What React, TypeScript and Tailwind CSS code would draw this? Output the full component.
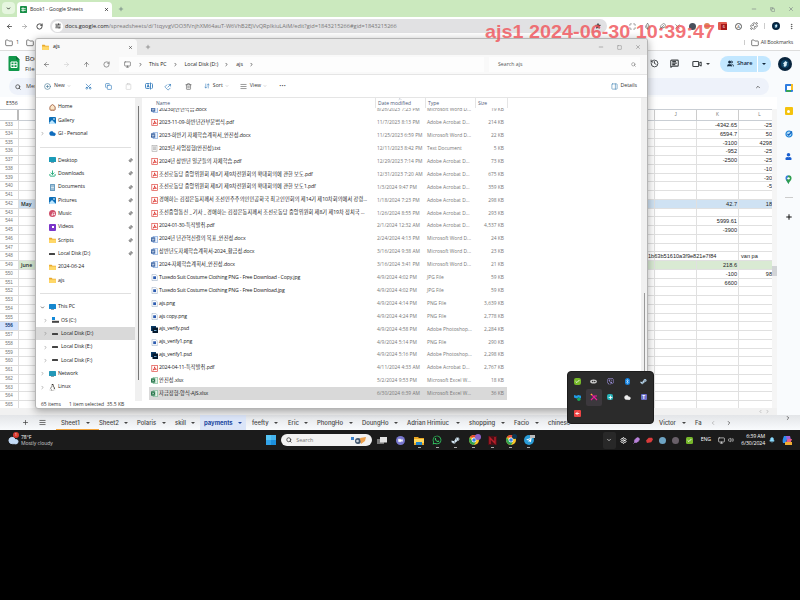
import React from "react";
import {
  ArrowLeft, ArrowRight, ArrowUp, RotateCw, ChevronDown, ChevronRight, ChevronLeft, ChevronUp, X, Plus, Minus, Square, Copy,
  Star, Search, Folder, History, MessageSquareText, Video, Scissors, Clipboard, Share, Trash2, ArrowDownUp,
  AlignJustify, Monitor, Pin, Bell, Puzzle, MoreVertical, Volume2, Maximize, House, Cloud, Music, Download, Users,
  PanelRight, CirclePlus, SlidersHorizontal, Mic, Bluetooth, Check, MapPin, Feather, Settings,
} from "lucide-react";
import { FaWhatsapp, FaSteamSymbol, FaTelegramPlane, FaLinux, FaUser, FaViber } from "react-icons/fa";

const SEGOE = "font-['Open_Sans','Noto_Sans_CJK_KR',sans-serif]";

/* ---------- shared bits ---------- */
const Caret = ({ className = "" }: { className?: string }) => (
  <svg viewBox="0 0 6 3" className={"h-[2px] w-[4px] shrink-0 " + className}><path d="M0 0h6L3 3z" fill="currentColor" /></svg>
);

const Avatar = ({ className }: { className: string }) => (
  <svg viewBox="0 0 14 14" className={"shrink-0 " + className}>
    <circle cx="7" cy="7" r="7" fill="#08243d" />
    <circle cx="7" cy="7" r="4" fill="#0f4568" />
    <path d="M7.500 4l2 1.500-1 1.500.5 1-2 2-1.500-1 .5-1.500-1-1z" fill="#d5ebf5" />
  </svg>
);

/* ---------- browser chrome ---------- */
function TabStrip() {
  return (
    <div className="flex h-[17px] items-end bg-[#cbe9be]">
      <div className="mb-[3px] ml-[2px] flex h-[12px] w-[13px] items-center justify-center rounded bg-[#e6f6df]">
        <ChevronDown className="size-[5px]" strokeWidth={3.5} />
      </div>
      <div className="ml-[2px] flex h-[15px] w-[95px] items-center rounded-t bg-white pl-[3px] pr-[3px]">
        <svg viewBox="0 0 8 8" className="size-[7px]"><rect width="8" height="8" rx="1" fill="#188f47" /><path d="M1.5 3h5M3.4 1.5v5M1.5 5h5" stroke="#fff" strokeWidth=".9" /></svg>
        <span className="ml-[3px] text-[5.300px] tracking-[-0.120px] text-[#333]">Book1 - Google Sheets</span>
        <X className="ml-auto size-[5px] text-[#111]" strokeWidth={3} />
      </div>
      <Plus className="mb-[5px] ml-[6px] size-[6px] text-[#456]" strokeWidth={2} />
      <div className="mb-[5px] ml-auto flex items-center gap-[13px] pr-[6px] text-[#667]">
        <Minus className="size-[6px]" /><Copy className="size-[5px]" /><X className="size-[6px]" />
      </div>
    </div>
  );
}

function AddressBar() {
  return (
    <div className="flex h-[18px] items-center bg-white pl-[6px] pr-[5px] text-[#333]">
      <ArrowLeft className="size-[7px]" strokeWidth={2.5} />
      <ArrowRight className="ml-[8px] size-[7px] text-[#888]" />
      <RotateCw className="ml-[8px] size-[7px]" strokeWidth={3} />
      <div className="ml-[7px] flex h-[14px] w-[557px] items-center rounded-full bg-[#e1e1e3] pl-[2px] pr-[6px]">
        <div className="flex size-[11px] items-center justify-center rounded-full bg-white"><SlidersHorizontal className="size-[6px]" strokeWidth={3} /></div>
        <span className="ml-[2px] whitespace-nowrap text-[5.600px] tracking-[0.010px] text-[#777]">
          <span className="text-[#222]">docs.google.com</span>/spreadsheets/d/1tqyvgVOO3fVnjhXM64auT-W6VhB2EJVvQRpIkiuLAiM/edit?gid=1843215266#gid=1843215266
        </span>
        <Star className="ml-auto size-[6px]" fill="#333" />
      </div>
      <div className="ml-auto flex items-center gap-[8px] text-[#555]">
        <Maximize className="size-[7px]" /><Mic className="size-[7px]" /><Feather className="size-[7px]" /><X className="size-[7px]" />
        <span className="size-[7px] rounded-full bg-[#49505c]" />
        <span className="size-[6px] rounded-full bg-[#df8556]" />
        <span className="flex h-[8px] w-[9px] items-end justify-end rounded-[1px] bg-[#e15b4e]"><span className="size-[6px] bg-[#a71818] text-center text-[4px] leading-[6px] text-white">6</span></span>
        <span className="size-[7px] rounded-full border-[0.7px] border-[#555] text-center text-[4px] leading-[6px]">A</span>
        <Puzzle className="size-[8px]" strokeWidth={2.4} />
        <span className="-ml-[2px] -mr-[1px] h-[6px] w-px bg-[#ccc]" />
        <Avatar className="size-[8px]" />
        <MoreVertical className="size-[7px]" strokeWidth={3} />
      </div>
    </div>
  );
}

function BookmarksBar() {
  return (
    <div className="flex h-[16px] items-center border-b border-[#ddd] bg-white pl-[5px] pr-[7px] text-[5.4px] text-[#444]">
      <Folder className="size-[8px]" /><span className="ml-[3px]">1</span><Folder className="ml-[7px] size-[8px]" />
      <span className="ml-auto h-[5px] w-px bg-[#ccc]" />
      <Folder className="ml-[6px] size-[8px]" /><span className="ml-[2px] text-[5.200px] tracking-[-0.180px]">All Bookmarks</span>
    </div>
  );
}

/* ---------- google sheets ---------- */
function SheetsHeader() {
  return (
    <div className="h-[46px] bg-[#f9fbfd]">
      <div className="flex h-[25px] items-center pl-[8px] pr-[8px]">
        <svg viewBox="0 0 11 15" className="h-[15px] w-[12px]"><path d="M1 0h6.500L11 3.500V14a1 1 0 0 1-1 1H1a1 1 0 0 1-1-1V1a1 1 0 0 1 1-1z" fill="#11984b" /><path d="M7.500 0L11 3.500H7.500z" fill="#087337" /><path d="M2.500 6h6v5.500h-6zM2.500 8.700h6M5.500 6v5.500" stroke="#fff" fill="none" /></svg>
        <div className="ml-[5px] leading-none text-[#333]">
          <div className="text-[7.500px]">Book1</div>
          <div className="mt-[3px] text-[6px]">File Edit</div>
        </div>
        <div className="ml-auto flex items-center text-[#3c4043]">
          <History className="size-[9px]" strokeWidth={2.400} />
          <MessageSquareText className="ml-[11px] size-[9px]" strokeWidth={2.800} />
          <Video className="ml-[13px] size-[10px]" strokeWidth={2.600} />
          <Caret className="ml-[4px]" />
          <div className="ml-[10px] flex h-[16px] w-[51px] items-center rounded-full bg-[#c2e7ff] text-[#10263b]">
            <Users className="ml-[7px] size-[7px]" fill="currentColor" />
            <span className="ml-[3px] text-[5.600px] font-semibold">Share</span>
            <span className="ml-[4px] h-full w-px bg-white" />
            <Caret className="ml-[4px]" />
          </div>
          <Avatar className="ml-[7px] size-[14px]" />
        </div>
      </div>
      <div className="ml-[9px] mt-[2px] flex h-[17px] w-[760px] items-center rounded-full bg-[#eef2fa] pl-[6px] pr-[8px] text-[#444]">
        <Search className="size-[6px]" strokeWidth={3} /><span className="ml-[5px] text-[5.600px]">Menus</span>
        <ChevronUp className="ml-auto size-[6px]" strokeWidth={3} />
      </div>
    </div>
  );
}

type GridRow = { a?: string; j?: string; k?: string; l?: string; tone?: string };
const gridData: Record<number, GridRow> = {
  533: { k: "-4342.65", l: "-25" }, 534: { k: "6594.7", l: "50" }, 535: { k: "-3100", l: "4298" }, 536: { k: "-952", l: "-25" },
  537: { k: "-2500", l: "-25" }, 538: { l: "-10" }, 539: { l: "-30" }, 540: { l: "-5" },
  542: { a: "May", k: "42.7", l: "18", tone: "bg-[#cfe2f3]" },
  544: { k: "5999.61" }, 545: { k: "-3900" }, 548: { j: "1b63b51610a3f9e821e7f84", l: "van pa" },
  549: { a: "June", k: "218.6", tone: "bg-[#d9ead3]" }, 550: { k: "-100", l: "98" }, 551: { k: "6600" },
};

function Grid() {
  const rows = Array.from({ length: 33 }, (_, i) => 533 + i);
  return (
    <div className="w-[772px] shrink-0 overflow-hidden bg-white font-['Liberation_Sans',sans-serif] text-[5.600px] text-[#222]">
      <div className="flex h-[12px] border-b border-t border-[#c9ced4] text-center text-[4.500px] leading-[10px] text-[#777]">
        <span className="w-[19px] shrink-0 border-r-2 border-[#bbb]" /><span className="w-[636px] shrink-0 border-r border-[#ccc]" />
        <span className="w-[42px] shrink-0 border-r border-[#ccc]">J</span><span className="w-[42px] shrink-0 border-r border-[#ccc]">K</span><span className="w-[33px] shrink-0 pl-[8px]">L</span>
      </div>
      {rows.map((n) => {
        const r = gridData[n] ?? {};
        const tone = r.tone ?? "";
        return (
          <div key={n} className="flex h-[8.760px] leading-[8.500px]">
            <span className={"w-[19px] shrink-0 border-b border-r border-[#ddd] text-center text-[4.600px] " + (n === 556 ? "bg-[#d3e3fd] font-bold text-[#143a73]" : "text-[#777]")}>{n}</span>
            <span className={"w-[636px] shrink-0 border-b border-r border-[#e0e0e0] pl-[2px] font-['Open_Sans',sans-serif] text-[5.200px] font-semibold " + tone}>{r.a}</span>
            <span className={"shrink-0 border-b border-[#e0e0e0] " + tone + (r.j ? " -ml-[7px] w-[49px] whitespace-nowrap" : " w-[42px] border-r")}>{r.j}</span>
            <span className={"w-[42px] shrink-0 border-b border-r border-[#e0e0e0] pr-[1px] text-right " + tone}>{r.k}</span>
            <span className={"w-[33px] shrink-0 border-b border-[#e0e0e0] " + tone + (r.l === "van pa" ? " pl-[2px]" : " text-right")}>{r.l}</span>
          </div>
        );
      })}
    </div>
  );
}

function SidePanel() {
  return (
    <div className="flex w-[23px] flex-col items-center bg-[#f9fbfd]">
      <svg viewBox="0 0 8 8" className="mt-[-13px] size-[8px]"><rect width="8" height="8" rx="1" fill="#2f7de1" /><rect x="2" y="2" width="4" height="4" fill="#fff" /><path d="M6 0h2v6H6z" fill="#f7be25" /><path d="M1 6h5v2H1z" fill="#38a457" /></svg>
      <div className="mt-[15px] flex size-[8px] items-center justify-center rounded-[1px] bg-[#f4c20d]"><span className="size-[3px] rounded-full bg-white" /></div>
      <svg viewBox="0 0 8 8" className="mt-[15px] size-[8px]"><circle cx="4" cy="4" r="3" fill="#b6def8" stroke="#1a80d8" strokeWidth="1.200" /><path d="M2.500 4l1.200 1.200L7 1.500" stroke="#1161bd" strokeWidth="1.200" fill="none" /></svg>
      <FaUser className="mt-[15px] size-[7px] text-[#1a5fd0]" />
      <svg viewBox="0 0 8 10" className="mt-[15px] h-[9px] w-[7px]"><path d="M4 10C3 7.500.5 6.500.5 3.700A3.500 3.500 0 0 1 4 .2z" fill="#3a7de0" /><path d="M4 .2a3.500 3.500 0 0 1 3.500 3.500C7.500 6.500 5 7.500 4 10L1.500 6z" fill="#2f9e50" /><circle cx="4" cy="3.700" r="1.400" fill="#fff" /></svg>
      <div className="mt-[13px] h-px w-[8px] bg-[#ccc]" />
      <Plus className="mt-[15px] size-[8px] text-[#111]" strokeWidth={3} />
    </div>
  );
}

const sheetTabs: [string, string][] = [
  ["Sheet1", "w-[38px] pr-[9px]"], ["Sheet2", "w-[38px] pr-[9px]"], ["Polaris", "w-[38px] pr-[9px]"], ["skill", "w-[25px] pr-[5px]"],
  ["payments", "w-[46px] px-[4px]"], ["feefty", "w-[42px] pl-[6px] pr-[10px]"], ["Eric", "w-[29px] pr-[9px]"], ["PhongHo", "w-[45px] pr-[9px]"],
  ["DoungHo", "w-[45px] pr-[9px]"], ["Adrian Hrimiuc", "w-[62px] pr-[9px]"], ["shopping", "w-[45px] pr-[9px]"], ["Facio", "w-[34px] pr-[9px]"],
  ["chinese", "w-[34px] pr-[4px]"], ["", "w-[77px]"], ["Victor", "w-[36px] pr-[9px]"],
];

function SheetTabs() {
  return (
    <div className="flex h-[15px] items-center bg-gradient-to-b from-[#e3e5e8] to-[#f9fbfd] font-['Inter',sans-serif] text-[5.900px] font-medium leading-none text-[#444]">
      <Plus className="ml-[22px] size-[7px]" strokeWidth={2.500} />
      <AlignJustify className="ml-[10px] size-[7px]" strokeWidth={2.500} />
      <div className="ml-[10px] flex h-full">
        {sheetTabs.map(([name, w]) => {
          const tone = name === "payments" ? " bg-[#dbe5f8] font-bold text-[#2047a0]" : name === "Sheet1" ? " ml-0 border-b border-[#f3a33a] pl-[5px] w-[43px] pr-[9px]" : "";
          return (
            <div key={name} className={"flex h-full items-center justify-between whitespace-nowrap pt-[1px] " + (name === "Sheet1" ? "" : w) + tone}>
              <span>{name}</span>{name && <Caret />}
            </div>
          );
        })}
      </div>
      <span className="pt-[1px]">Fa</span>
      <ChevronLeft className="ml-[8px] size-[6px] text-[#aaa]" strokeWidth={3} />
      <ChevronRight className="ml-[10px] size-[6px]" strokeWidth={3} />
      <ChevronRight className="ml-auto mr-[9px] size-[6px] self-start" strokeWidth={3} />
    </div>
  );
}

/* ---------- file explorer ---------- */
type Kind = "docx" | "pdf" | "txt" | "img" | "psd" | "xlsx";
const files: [Kind, string, string, string, string][] = [
  ["docx", "2023하반년학습.docx", "8/26/2023 7:23 PM", "Microsoft Word D...", "19 KB"],
  ["pdf", "2023-11-09-하반년간부문법식.pdf", "11/7/2023 8:13 PM", "Adobe Acrobat D...", "214 KB"],
  ["docx", "2023-하반기 자체학습계획서_안진성.docx", "11/25/2023 6:59 PM", "Microsoft Word D...", "22 KB"],
  ["txt", "2023년 사업정형(안진성).txt", "12/11/2023 8:42 PM", "Text Document", "5 KB"],
  ["pdf", "2024년 상반년 일군들의 자체학습.pdf", "12/29/2023 7:14 PM", "Adobe Acrobat D...", "73 KB"],
  ["pdf", "조선로동당 중앙위원회 제8기 제9차전원회의 확대회의에 관한 보도.pdf", "12/31/2023 7:20 AM", "Adobe Acrobat D...", "675 KB"],
  ["pdf", "조선로동당 중앙위원회 제8기 제9차전원회의 확대회의에 관한 보도1.pdf", "1/3/2024 9:47 PM", "Adobe Acrobat D...", "359 KB"],
  ["pdf", "경애하는 김정은동지께서 조선민주주의인민공화국 최고인민회의 제14기 제10차회의에서 강령...", "1/18/2024 7:23 PM", "Adobe Acrobat D...", "298 KB"],
  ["pdf", "조선중앙통신 _ 기사 _ 경애하는 김정은동지께서 조선로동당 중앙위원회 제8기 제19차 정치국 ...", "1/26/2024 8:55 PM", "Adobe Acrobat D...", "293 KB"],
  ["pdf", "2024-01-30-특작발취.pdf", "2/1/2024 12:32 AM", "Adobe Acrobat D...", "4,537 KB"],
  ["docx", "2024년 년간혁신결의 목표_안진성.docx", "2/24/2024 4:13 PM", "Microsoft Word D...", "24 KB"],
  ["docx", "상반년도자체학습계획서-2024_황금성.docx", "3/16/2024 9:38 AM", "Microsoft Word D...", "23 KB"],
  ["docx", "2024-자체학습계획서_안진성.docx", "3/16/2024 3:41 PM", "Microsoft Word D...", "21 KB"],
  ["img", "Tuxedo Suit Costume Clothing PNG - Free Download - Copy.jpg", "4/9/2024 4:02 PM", "JPG File", "59 KB"],
  ["img", "Tuxedo Suit Costume Clothing PNG - Free Download.jpg", "4/9/2024 4:02 PM", "JPG File", "59 KB"],
  ["img", "ajs.png", "4/9/2024 4:14 PM", "PNG File", "3,639 KB"],
  ["img", "ajs copy.png", "4/9/2024 4:24 PM", "PNG File", "2,778 KB"],
  ["psd", "ajs_verify.psd", "4/9/2024 4:58 PM", "Adobe Photoshop...", "2,284 KB"],
  ["img", "ajs_verify1.png", "4/9/2024 5:14 PM", "PNG File", "290 KB"],
  ["psd", "ajs_verify1.psd", "4/9/2024 5:16 PM", "Adobe Photoshop...", "2,298 KB"],
  ["pdf", "2024-04-11-특작발취.pdf", "4/11/2024 4:33 AM", "Adobe Acrobat D...", "2,767 KB"],
  ["xlsx", "안진성.xlsx", "5/2/2024 9:53 PM", "Microsoft Excel W...", "18 KB"],
  ["xlsx", "자금정형-양식-AJS.xlsx", "6/30/2024 6:39 AM", "Microsoft Excel W...", "36 KB"],
];

/* Hangul runs are set a little looser than Latin runs. */
const FileName = ({ name }: { name: string }) => (
  <span className="ml-[1px] tracking-[-0.170px]">
    {name.split(/([가-힣]+)/).map((part, i) => (i % 2 ? <span key={i} className="tracking-[0.120px]">{part}</span> : part))}
  </span>
);

function FileIcon({ kind }: { kind: Kind }) {
  return (
    <svg viewBox="0 0 7 7" className="size-[7px] shrink-0">
      {kind === "docx" && <><path d="M2 .4h4.600v6.200H2z" fill="#eaf2fd" stroke="#4a7fcb" strokeWidth=".5" /><rect y="1.400" width="4.200" height="4.200" fill="#2b579a" /><path d="M.8 2.500l.6 2 .7-2 .7 2 .6-2" stroke="#fff" strokeWidth=".5" fill="none" /></>}
      {kind === "xlsx" && <><path d="M2 .4h4.600v6.200H2z" fill="#e3f3e8" stroke="#4aa371" strokeWidth=".5" /><rect y="1.400" width="4.200" height="4.200" fill="#217346" /><path d="M1.200 2.500l1.800 2M3 2.500l-1.800 2" stroke="#fff" strokeWidth=".6" /></>}
      {kind === "pdf" && <><rect x=".8" y=".5" width="5.600" height="6" fill="#fff" stroke="#e04a43" strokeWidth=".7" /><path d="M2 5.200c1-1 1.600-2 1.600-3.400 0 1.500.8 2.300 1.800 2.500-1.200-.2-2.500.2-3.400.9z" fill="none" stroke="#d81e18" strokeWidth=".8" /></>}
      {kind === "txt" && <><rect x="1" y=".4" width="5" height="6.200" fill="#f4f4f4" stroke="#999" strokeWidth=".5" /><path d="M2 2h3M2 3.200h3M2 4.400h3" stroke="#888" strokeWidth=".5" /></>}
      {kind === "img" && <><path d="M1 .4h3.800L6.300 2v4.600H1z" fill="#fff" stroke="#8aa0bb" strokeWidth=".5" /><rect x="2.200" y="2.300" width="2.800" height="2.800" fill="#2d5cb0" /></>}
      {kind === "psd" && <><rect width="5" height="5" fill="#0a3a66" /><rect x="1.500" y="1.500" width="5.500" height="5.500" fill="#04192e" /><path d="M3 4.500h2.500" stroke="#8cc8f5" strokeWidth=".8" /></>}
    </svg>
  );
}

const FolderIcon = () => (
  <svg viewBox="0 0 8 7" className="h-[6px] w-[7px] shrink-0"><path d="M0 1h3l1 1h4v5H0z" fill="#e8a92c" /><path d="M0 2.800h8V7H0z" fill="#ffd869" /></svg>
);
const DriveIcon = () => <span className="h-[2px] w-[6px] shrink-0 rounded-[0.5px] bg-[#444]" />;
const PicIcon = () => <svg viewBox="0 0 7 7" className="size-[7px]"><rect width="7" height="7" rx="1" fill="#0d6fb8" /><path d="M0 6l3-3 4 4H1z" fill="#bde6ff" /><circle cx="5" cy="2" r=".8" fill="#fff" /></svg>;
const PcIcon = ({ fill = "#1587cf" }: { fill?: string }) => <svg viewBox="0 0 7 6" className="h-[6px] w-[7px]"><rect width="7" height="5" rx=".6" fill={fill} /><path d="M2 5.600h3" stroke="#678" strokeWidth=".8" /></svg>;

type Nav = { label?: string; icon?: React.ReactNode; arrow?: "r" | "d"; pin?: boolean; child?: boolean; active?: boolean };
const nav: Nav[] = [
  { label: "Home", icon: <House className="size-[7px] text-[#9b5a3c]" strokeWidth={3} fill="#fbe6c8" /> },
  { label: "Gallery", icon: <PicIcon /> },
  { label: "GI - Personal", icon: <Cloud className="size-[7px] text-[#0f6cbd]" fill="#0f6cbd" />, arrow: "r" },
  {},
  { label: "Desktop", icon: <PcIcon fill="#1b9bb8" />, pin: true },
  { label: "Downloads", icon: <Download className="size-[7px] text-[#17a672]" strokeWidth={3} />, pin: true },
  { label: "Documents", icon: <svg viewBox="0 0 7 7" className="size-[7px]"><rect x="1" width="5" height="7" rx=".6" fill="#6b9dbf" /><path d="M2 2h3M2 3.500h3M2 5h3" stroke="#fff" strokeWidth=".7" /></svg>, pin: true },
  { label: "Pictures", icon: <PicIcon />, pin: true },
  { label: "Music", icon: <span className="flex size-[7px] items-center justify-center rounded-full bg-[#d0516c]"><Music className="size-[4px] text-white" strokeWidth={3} /></span>, pin: true },
  { label: "Videos", icon: <span className="flex size-[7px] items-center justify-center rounded-[1px] bg-[#7b35c9]"><span className="size-[2px] bg-white" /></span>, pin: true },
  { label: "Scripts", icon: <FolderIcon />, pin: true },
  { label: "Local Disk (D:)", icon: <DriveIcon />, pin: true },
  { label: "2024-06-24", icon: <FolderIcon /> },
  { label: "ajs", icon: <FolderIcon /> },
  {},
  { label: "This PC", icon: <PcIcon />, arrow: "d" },
  { label: "OS (C:)", icon: <svg viewBox="0 0 7 6" className="h-[6px] w-[7px]"><rect x="0" y="0" width="3" height="3" fill="#1389d8" /><rect y="3.800" width="7" height="2" fill="#444" /></svg>, arrow: "r", child: true },
  { label: "Local Disk (D:)", icon: <DriveIcon />, arrow: "r", child: true, active: true },
  { label: "Local Disk (E:)", icon: <DriveIcon />, arrow: "r", child: true },
  { label: "Local Disk (F:)", icon: <DriveIcon />, arrow: "r", child: true },
  { label: "Network", icon: <PcIcon fill="#2498b8" />, arrow: "r" },
  { label: "Linux", icon: <FaLinux className="size-[7px] text-[#33302a]" />, arrow: "r" },
];

function NavPane() {
  return (
    <div className="w-[99px] shrink-0 pt-[2.500px]">
      {nav.map((n, i) => n.label ? (
        <div key={i} className={"flex h-[13.330px] items-center pr-[2px] text-[5.200px] text-[#222] " + (n.child ? "pl-[7px] " : "pl-[4px] ") + (n.active ? "bg-[#d9d9d9]" : "")}>
          <span className="flex w-[9px] items-center">
            {n.arrow === "r" && <ChevronRight className="size-[5px] text-[#777]" strokeWidth={2.500} />}
            {n.arrow === "d" && <ChevronDown className="size-[5px] text-[#333]" strokeWidth={3} />}
          </span>
          <span className="flex w-[9px] shrink-0 items-center">{n.icon}</span>
          <span className="whitespace-nowrap tracking-[-0.100px]">{n.label}</span>
          {n.pin && <Pin className="ml-auto size-[5px] rotate-45 text-[#777]" strokeWidth={2.500} fill="#999" />}
        </div>
      ) : (
        <div key={i} className="flex h-[13.330px] items-center"><div className="ml-[4px] h-px w-[91px] bg-[#e0e0e0]" /></div>
      ))}
    </div>
  );
}

function FileList() {
  return (
    <div className="min-w-0 flex-1">
      <div className="flex h-[10px] items-center text-[5px] text-[#4c5a78]">
        <span className="w-[226px] pl-[7px] pt-[1px]">Name</span>
        <span className="relative h-full w-[50px] border-l border-[#e5e5e5] pl-[2px] leading-[11px]">
          Date modified<ChevronUp className="absolute left-[22px] top-[-1px] size-[4px]" />
        </span>
        <span className="h-full w-[50px] border-l border-[#e5e5e5] pl-[2px] leading-[11px]">Type</span>
        <span className="h-full w-[33px] border-x border-[#e5e5e5] pl-[2px] leading-[11px]">Size</span>
      </div>
      <div className="h-[293px] overflow-hidden">
        <div className="-mt-[4.500px]">
          {files.map(([kind, name, date, type, size], i) => (
            <div key={name} className={"flex h-[12.910px] w-[358px] items-center whitespace-nowrap text-[4.900px] text-[#777] " + (i === files.length - 1 ? "bg-[#d9d9d9]" : "")}>
              <span className="flex w-[228px] items-center pl-[2px] text-[5.200px] text-[#222]"><FileIcon kind={kind} /><FileName name={name} /></span>
              <span className="w-[50px]">{date}</span>
              <span className="w-[45px]">{type}</span>
              <span className="w-[32px] text-right">{size}</span>
            </div>
          ))}
        </div>
      </div>
    </div>
  );
}

const RenameIcon = ({ className }: { className: string }) => (
  <svg viewBox="0 0 16 16" className={className} fill="none" stroke="currentColor" strokeWidth="1.600"><path d="M9 3H3a2 2 0 0 0-2 2v6a2 2 0 0 0 2 2h6M13 3a2 2 0 0 1 2 2v6a2 2 0 0 1-2 2M11 1v14M4 11l2.200-6 2.200 6M4.800 9h3" /></svg>
);

function Explorer() {
  return (
    <div className="absolute left-[35px] top-[38px] flex h-[371px] w-[613px] flex-col overflow-hidden rounded-[3px] border border-[#b5b5b5] bg-white shadow-[0_2px_8px_rgba(0,0,0,0.35)]">
      <div className="flex h-[16px] shrink-0 items-center bg-[#e8e8e8]">
        <div className="flex h-full w-[101px] items-center rounded-t bg-[#f9f9f9] pl-[6px] pr-[4px]">
          <FolderIcon /><span className="ml-[4px] text-[5.200px]">ajs</span><X className="ml-auto size-[5px]" />
        </div>
        <Plus className="ml-[8px] size-[6px] text-[#555]" />
        <div className="ml-auto flex items-center gap-[13px] pr-[6px] text-[#777]"><Minus className="size-[6px]" /><Square className="size-[5px]" /><X className="size-[6px]" /></div>
      </div>
      <div className="flex h-[20px] shrink-0 items-center border-b border-[#e5e5e5] bg-[#f9f9f9] text-[5.200px] text-[#222]">
        <ArrowLeft className="ml-[7px] size-[7px] text-[#555]" />
        <ArrowRight className="ml-[13px] size-[7px] text-[#ccc]" />
        <ArrowUp className="ml-[13px] size-[7px] text-[#555]" />
        <RotateCw className="ml-[13px] size-[7px] text-[#555]" />
        <div className="ml-[9px] flex h-[15px] w-[365px] items-center bg-[#fdfdfd] pl-[5px]">
          <Monitor className="size-[7px] text-[#555]" />
          <ChevronRight className="ml-[7px] size-[5px]" strokeWidth={3} /><span className="ml-[6px]">This PC</span>
          <ChevronRight className="ml-[6px] size-[5px]" strokeWidth={3} /><span className="ml-[7px]">Local Disk (D:)</span>
          <ChevronRight className="ml-[6px] size-[5px]" strokeWidth={3} /><span className="ml-[7px]">ajs</span><ChevronRight className="ml-[6px] size-[5px]" strokeWidth={3} />
        </div>
        <div className="ml-[5px] flex h-[15px] w-[151px] items-center bg-[#fdfdfd] pl-[9px] pr-[4px] text-[#555]"><span>Search ajs</span><Search className="ml-auto size-[5px]" /></div>
      </div>
      <div className="flex h-[23px] shrink-0 items-center border-b border-[#e5e5e5] bg-white pt-[0.500px] text-[5.200px] text-[#333]">
        <CirclePlus className="ml-[8px] size-[7px] text-[#3d7291]" /><span className="ml-[3px]">New</span><ChevronDown className="ml-[2px] size-[4px] text-[#888]" />
        <Scissors className="ml-[14px] size-[7px] -rotate-90 text-[#1f6fb5]" />
        <Copy className="ml-[13px] size-[7px] text-[#1f6fb5]" />
        <Clipboard className="ml-[13px] size-[7px] text-[#ccc]" />
        <RenameIcon className="ml-[13px] size-[8px] text-[#1f6fb5]" />
        <Share className="ml-[12px] size-[7px] rotate-45 text-[#1f6fb5]" />
        <Trash2 className="ml-[13px] size-[7px] text-[#555]" />
        <ArrowDownUp className="ml-[12px] size-[6px] text-[#1f6fb5]" /><span className="ml-[3px]">Sort</span><ChevronDown className="ml-[2px] size-[4px] text-[#888]" />
        <AlignJustify className="ml-[11px] size-[7px] text-[#555]" /><span className="ml-[3px]">View</span><ChevronDown className="ml-[2px] size-[4px] text-[#888]" />
        <span className="ml-[12px] text-[7px] font-bold tracking-[0.300px]">···</span>
        <PanelRight className="ml-auto size-[7px] text-[#3c7fb2]" /><span className="ml-[3px] mr-[10px]">Details</span>
      </div>
      <div className="flex h-[303px] shrink-0 overflow-hidden">
        <NavPane />
        <div className="flex w-[7px] shrink-0 justify-center bg-[#f0f0f0] py-[7px]"><div className="mt-[1px] h-[274px] w-px bg-[#777]" /></div>
        <div className="w-[7px]" />
        <FileList />
        <div className="w-[6px] bg-[#f0f0f0] pt-[195px]"><div className="mx-auto h-[104px] w-px bg-[#999]" /></div>
      </div>
      <div className="flex flex-1 items-center pb-[1px] pl-[5px] text-[5px] leading-none text-[#333]"><span>65 items</span><span className="ml-[8px]">1 item selected&nbsp; 35.5 KB</span></div>
    </div>
  );
}

/* ---------- taskbar ---------- */
const ChromeLogo = () => (
  <svg viewBox="0 0 10 10" className="size-[10px]"><circle cx="5" cy="5" r="5" fill="#f9c52a" /><path d="M.7 2.500A5 5 0 0 1 9.300 2.500H5z" fill="#e7443a" /><path d="M.7 2.500A5 5 0 0 0 5 10l2-3.500-4-1z" fill="#31a453" /><circle cx="5" cy="5" r="2.400" fill="#fff" /><circle cx="5" cy="5" r="1.800" fill="#347fe5" /></svg>
);
const TaskIcon = ({ children, on }: { children: React.ReactNode; on?: boolean }) => (
  <div className="relative flex h-[20px] w-[18.300px] shrink-0 items-center justify-center">
    <div className="relative flex h-[11px] items-center">{children}</div>
    {on && <span className="absolute bottom-[2px] h-px w-[3px] bg-[#aaa]" />}
  </div>
);

function Taskbar() {
  return (
    <div className="flex h-[20px] items-center bg-[#1b1b1b] text-white">
      <div className="flex w-[262px] items-center pl-[8px]">
        <div className="relative">
          <Cloud className="size-[11px] text-[#c4dcf8]" fill="#c4dcf8" />
          <span className="absolute -top-[3px] left-[5px] size-[6px] rounded-full bg-[#d83a2f] text-center text-[4px] leading-[6px]">1</span>
        </div>
        <div className="ml-[2px] text-[5.100px] leading-[6.500px] tracking-[-0.070px]"><div>78°F</div><div className="text-[#ccc]">Mostly cloudy</div></div>
      </div>
      <TaskIcon><span className="grid size-[10px] grid-cols-2 gap-[0.600px]"><i className="bg-[#55c5f5]" /><i className="bg-[#45b4ef]" /><i className="bg-[#32a3e9]" /><i className="bg-[#1c90dd]" /></span></TaskIcon>
      <div className="ml-[1px] flex h-[12px] w-[91px] items-center rounded-full bg-[#f2f2f2] px-[5px] text-[#333]">
        <Search className="size-[6px]" strokeWidth={3} /><span className="ml-[4px] text-[5.400px] text-[#777]">Search</span>
        <svg viewBox="0 0 16 9" className="ml-auto h-[9px] w-[16px]"><rect x="0" y="1" width="3" height="3" fill="#3c82cb" /><circle cx="7" cy="5" r="3" fill="#40556d" /><circle cx="6.500" cy="5" r="1.300" fill="#ccd5df" /><path d="M9 2l6-1-1 4-4 3z" fill="#eda04b" /></svg>
      </div>
      <div className="ml-[1px] flex">
        <TaskIcon><svg viewBox="0 0 10 9" className="h-[9px] w-[10px]"><rect y="3" width="7" height="5" fill="#777" /><rect x="3" y="1" width="7" height="5.500" fill="#e2e2e2" /></svg></TaskIcon>
        <TaskIcon><span className="flex size-[9px] items-center justify-center rounded-full bg-[#7776cf]"><Video className="size-[5px]" fill="white" /></span></TaskIcon>
        <TaskIcon on><svg viewBox="0 0 10 9" className="h-[9px] w-[10px]"><path d="M0 1h4l1 1h5v7H0z" fill="#e9a623" /><path d="M0 3h10v4H0z" fill="#ffd85d" /><path d="M2 6h6v3H2z" fill="#2586c8" /></svg></TaskIcon>
        <TaskIcon on><FaWhatsapp className="size-[10px] text-[#33d366]" /></TaskIcon>
        <TaskIcon on><FaSteamSymbol className="size-[9px] text-[#d5e9f6]" /></TaskIcon>
        <TaskIcon on><ChromeLogo /><span className="absolute -right-[2px] -top-[1px] size-[6px] rounded-full bg-[#8c62c7]" /></TaskIcon>
        <TaskIcon on><svg viewBox="0 0 9 9" className="size-[9px]"><rect width="9" height="9" fill="#4a1016" /><path d="M2 8V2l5 5V1" stroke="#b91f2a" strokeWidth="1.400" fill="none" /></svg></TaskIcon>
        <TaskIcon on><ChromeLogo /><span className="absolute -right-[1px] -top-[1px] size-[5px] rounded-full bg-[#0a3552]" /></TaskIcon>
        <TaskIcon on><span className="flex size-[10px] items-center justify-center rounded-full bg-[#2a9bd6]"><FaTelegramPlane className="size-[6px]" /></span><span className="absolute -right-[1px] top-0 h-[3px] w-[5px] bg-[#bbb]" /></TaskIcon>
      </div>
      <div className="ml-auto flex items-center pr-[8px]">
        <div className="flex h-[17px] w-[13px] items-center justify-center rounded-[2px] bg-[#282828]"><ChevronDown className="size-[6px]" strokeWidth={2.500} /></div>
        <Settings className="ml-[4px] size-[7px]" strokeWidth={3} />
        <Feather className="ml-[6px] size-[7px] text-[#ba83db]" fill="#ba83db" />
        <svg viewBox="0 0 8 7" className="ml-[6px] h-[6px] w-[7px]"><path d="M0 4l3-3h4l1 2-2 3-5 1z" fill="#da3b3b" /></svg>
        <span className="ml-[6px] size-[7px] rounded-full bg-[#6ea4c4]" />
        <span className="ml-[6px] size-[7px] rounded-full bg-[#696069]" />
        <span className="ml-[7px] flex size-[7px] items-center justify-center rounded-[1.500px] bg-[#76b82a]"><Check className="size-[5px]" strokeWidth={4} /></span>
        <span className="ml-[8px] text-[5.200px] tracking-[-0.100px]">ENG</span>
        <Monitor className="ml-[7px] size-[7px]" />
        <Volume2 className="ml-[3px] size-[6px]" />
        <div className="ml-[6px] w-[25px] whitespace-nowrap text-right text-[5.200px] leading-[6.600px] tracking-[-0.100px]"><div>6:39 AM</div><div>6/30/2024</div></div>
        <Bell className="ml-[4px] size-[6px] text-[#8cdcff]" fill="#8cdcff" />
        <svg viewBox="0 0 10 10" className="ml-[7px] size-[10px]"><path d="M2 1h4L4 8H1C0 6 1 3 2 1z" fill="#2e8cec" /><path d="M4 1h4l1 4-4 1z" fill="#9a62da" /><path d="M6 4h4L8 9H3z" fill="#e85f87" /><rect x="3" y="7" width="7" height="3" fill="#efac32" /></svg>
      </div>
    </div>
  );
}

function TrayPopup() {
  const cells: React.ReactNode[] = [
    <span className="flex size-[7px] items-center justify-center rounded-[2px] bg-[#76b82a]"><Check className="size-[5px] text-white" strokeWidth={4} /></span>,
    <svg viewBox="0 0 8 6" className="h-[5px] w-[7px]"><ellipse cx="4" cy="3" rx="4" ry="2.500" fill="#ccc" /><circle cx="3" cy="3" r="1" fill="#333" /><circle cx="5.500" cy="3" r="1" fill="#333" /></svg>,
    <FaViber className="size-[7px] text-[#a99bf0]" />,
    <span className="flex h-[7px] w-[5px] items-center justify-center rounded-full bg-[#1583e0]"><Bluetooth className="size-[5px] text-white" /></span>,
    <FaSteamSymbol className="size-[7px] text-[#b9d8ef]" />,
    <svg viewBox="0 0 8 8" className="size-[7px]"><path d="M0 1l3 1 2-1 3 1v3L5 4 3 5 0 4z" fill="#219be4" /><circle cx="5.500" cy="6" r="2" fill="#1aa55c" /></svg>,
    <svg viewBox="0 0 8 8" className="size-[8px]"><path d="M1 1l5 5M1 7l3-3 3 3M4 3h3" stroke="#ef1c9b" strokeWidth="1.200" fill="none" /><circle cx="1.500" cy="1.500" r=".8" fill="#ffca28" /></svg>,
    <span className="flex size-[6px] items-center justify-center rounded-[2px] bg-[#27b2b7]"><Plus className="size-[5px] text-white" strokeWidth={4} /></span>,
    <Cloud className="size-[7px] text-[#eee]" fill="#eee" />,
    <span className="flex size-[6px] items-center justify-center rounded-[1px] bg-[#6b6fca] text-[5px] font-bold leading-none text-white">T</span>,
    <span className="flex size-[7px] items-center justify-center rounded-[1px] bg-[#ed4343]"><ArrowLeft className="size-[5px] text-white" strokeWidth={4} /></span>,
  ];
  return (
    <div className="absolute left-[567px] top-[371px] grid h-[53px] w-[87px] grid-cols-5 grid-rows-3 rounded-[4px] border border-[#1c1c1c] bg-[#2b2b2b] px-[1px] py-[1px]">
      {cells.map((c, i) => <div key={i} className={"flex items-center justify-center " + (i === 6 ? "rounded-[2px] bg-[#3c383d]" : "")}>{c}</div>)}
    </div>
  );
}

export default function App() {
  return (
    <div className={"relative h-[600px] w-[800px] overflow-hidden bg-black leading-normal " + SEGOE}>
      <TabStrip />
      <AddressBar />
      <BookmarksBar />
      <SheetsHeader />
      <div className="flex h-[318px] bg-[#f9fbfd]">
        <div className="w-[777px]">
          <div className="flex h-[12px] items-center bg-white pl-[6px] pt-[1px] text-[5.200px] text-[#333]">E556</div>
          <div className="flex h-[299px] overflow-hidden"><Grid /><div className="w-[5px] bg-[#f5f5f5] pt-[157px]"><div className="h-[10px] bg-[#d2d4d7]" /></div></div>
          <div className="flex h-[7px] items-center justify-end gap-[2px] bg-[#f1f1f1] pr-[7px] text-[#888]"><ChevronLeft className="size-[5px]" /><ChevronRight className="size-[5px]" /></div>
        </div>
        <SidePanel />
      </div>
      <SheetTabs />
      <Taskbar />
      <Explorer />
      <TrayPopup />
      <div className="absolute left-[485px] top-[20px] origin-left scale-x-[1.113] whitespace-nowrap font-['Liberation_Sans',sans-serif] text-[17.800px] font-bold leading-[24px] text-[#f05a60]/85">ajs1 2024-06-30 10:39:47</div>
    </div>
  );
}
